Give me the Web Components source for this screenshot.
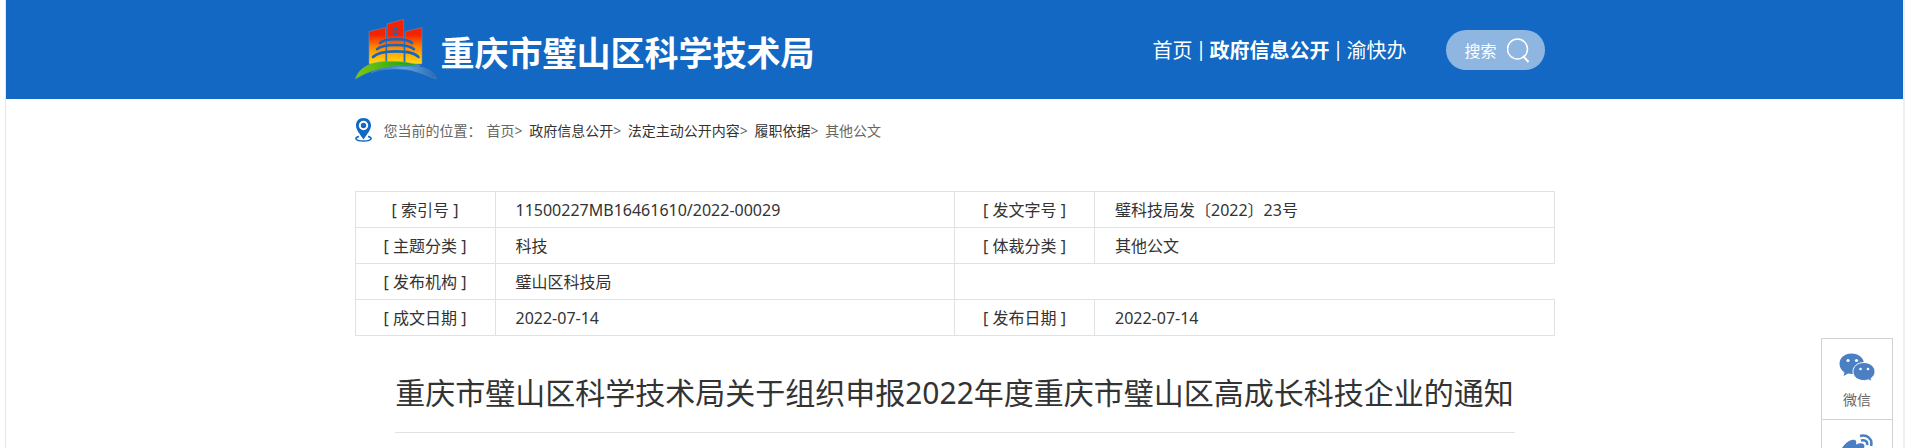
<!DOCTYPE html>
<html lang="zh-CN">
<head>
<meta charset="utf-8">
<title>重庆市璧山区科学技术局</title>
<style>
  html {
    background-color: #ffffff;
  }

  body {
    border-left: solid 1px #e5e5e5;
    border-right: solid 2px #f0f0f0;
    color: #333333;
    font-family: "Noto Sans", "Noto Sans CJK SC", sans-serif;
    font-size: 16px;
    margin: 0 0 0 5px;
    min-height: 100vh;
  }
</style>
</head>
<body>

<gov-header label="重庆市璧山区科学技术局">
  <a href="#">首页</a> | <a href="#" class="current">政府信息公开</a> | <a href="#">渝快办</a>
</gov-header>
<main>
  <gov-breadcrumb label="您当前的位置：">
    <a href="#" class="light">首页</a>&gt;
    <a href="#">政府信息公开</a>&gt;
    <a href="#">法定主动公开内容</a>&gt;
    <a href="#">履职依据</a>&gt;
    <a href="#" class="light">其他公文</a>
  </gov-breadcrumb>
  <gov-record></gov-record>
  <gov-title>重庆市璧山区科学技术局关于组织申报2022年度重庆市璧山区高成长科技企业的通知</gov-title>
</main>
<gov-share></gov-share>

<script>
class GovLogo extends HTMLElement {
  constructor() {
    super();

    const template = document.createElement( 'template' );
    template.innerHTML = /* template */ `
      <style>
        :host {
          display: block;
        }

        svg {
          display: block;
        }
      </style>
      <svg width="82" height="64" viewBox="0 0 82 64" fill="none">
        <defs>
          <linearGradient id="wall" x1="0" y1="0" x2="0" y2="48" gradientUnits="userSpaceOnUse">
            <stop offset="0.35" stop-color="#f52200"></stop>
            <stop offset="0.62" stop-color="#ff8a00"></stop>
            <stop offset="1" stop-color="#ffe714"></stop>
          </linearGradient>
          <linearGradient id="hill">
            <stop offset="0" stop-color="#82c80a"></stop>
            <stop offset="1" stop-color="#04a018"></stop>
          </linearGradient>
          <linearGradient id="river">
            <stop offset="0" stop-color="#1268c2"></stop>
            <stop offset="0.5" stop-color="#5eaae4"></stop>
            <stop offset="1" stop-color="#2b67b4"></stop>
          </linearGradient>
        </defs>
        <path d="M14 13.500 L30.500 9.500 V46 H14 Z M32 6 L48.700 1.300 V46 H32 Z M50.300 13.500 L67 9.500 V46 H50.300 Z" fill="url( #wall )" stroke="#7887aa" stroke-width=".6"></path>
        <rect x="38.500" y="10.500" width="4" height="6" rx="2" stroke="#1268c2" stroke-width="1.600"></rect>
        <g stroke="#1268c2" stroke-width="2.600" stroke-linecap="round">
          <path d="M25 25 C30 20 52 20 57 25"></path>
          <path d="M22 31.200 C28 25.500 53 25.500 59 31.200"></path>
          <path d="M18 39 C25 31.500 57 31.500 63.500 39"></path>
        </g>
        <path d="M.500 61 C3 51 14 44 30 43.500 C43 43 56 44 65 48 C45 45 16 50 .500 61 Z" fill="url( #hill )" stroke="#74a880" stroke-width=".6"></path>
        <path d="M16 55 C25 51 34 51 42 51 C55 51 64 54 81 61 C79 51 64 47 51 48.500 C37 48 24 50 16 55 Z" fill="url( #river )" stroke="#5b8cba" stroke-width=".6"></path>
      </svg>
    `;

    // Root
    this.attachShadow( {mode: 'open'} );
    this.shadowRoot.appendChild( template.content.cloneNode( true ) );
  }
}

window.customElements.define( 'gov-logo', GovLogo );

class GovSearch extends HTMLElement {
  constructor() {
    super();

    const template = document.createElement( 'template' );
    template.innerHTML = /* template */ `
      <style>
        :host {
          display: block;
        }

        button {
          align-items: center;
          background-color: #8fb6e1;
          border: none;
          border-radius: 20px;
          color: #ffffff;
          cursor: pointer;
          display: flex;
          font-family: inherit;
          font-size: 16px;
          gap: 10px;
          height: 40px;
          margin: 0;
          padding: 0 16px 0 18px;
        }

        svg {
          display: block;
        }
      </style>
      <button type="button">
        <span>搜索</span>
        <svg width="22" height="26" viewBox="0 0 22 26" fill="none" stroke="#ffffff" stroke-width="1.500">
          <circle cx="10.500" cy="12" r="10"></circle>
          <path d="M16 19 L21.500 25" stroke-width="2"></path>
        </svg>
      </button>
    `;

    // Root
    this.attachShadow( {mode: 'open'} );
    this.shadowRoot.appendChild( template.content.cloneNode( true ) );
  }
}

window.customElements.define( 'gov-search', GovSearch );

class GovHeader extends HTMLElement {
  constructor() {
    super();

    const template = document.createElement( 'template' );
    template.innerHTML = /* template */ `
      <style>
        :host {
          background-color: #1268c2;
          color: #ffffff;
          display: block;
        }

        header {
          align-items: center;
          box-sizing: border-box;
          display: flex;
          height: 99px;
          margin: 0 auto;
          max-width: 1200px;
        }

        h1 {
          font-size: 34px;
          font-weight: 700;
          line-height: 48px;
          margin: 0;
          padding: 6px 0 0 4px;
          white-space: nowrap;
        }

        nav {
          display: flex;
          font-size: 20px;
          gap: 3px;
          margin-left: auto;
          white-space: nowrap;
        }

        ::slotted( a ) {
          color: #ffffff;
          text-decoration: none;
        }

        ::slotted( .current ) {
          font-weight: 700;
        }

        gov-search {
          margin: 0 10px 0 40px;
        }
      </style>
      <header>
        <gov-logo></gov-logo>
        <h1></h1>
        <nav><slot></slot></nav>
        <gov-search></gov-search>
      </header>
    `;

    // Root
    this.attachShadow( {mode: 'open'} );
    this.shadowRoot.appendChild( template.content.cloneNode( true ) );

    // Elements
    this.$label = this.shadowRoot.querySelector( 'h1' );
  }

  // When attributes change
  _render() {
    this.$label.textContent = this.getAttribute( 'label' );
  }

  // Setup
  connectedCallback() {
    this._render();
  }

  // Watched attributes
  static get observedAttributes() {
    return ['label'];
  }

  // Observed attribute has changed
  // Update render
  attributeChangedCallback( name, old, value ) {
    this._render();
  }
}

window.customElements.define( 'gov-header', GovHeader );

class GovBreadcrumb extends HTMLElement {
  constructor() {
    super();

    const template = document.createElement( 'template' );
    template.innerHTML = /* template */ `
      <style>
        :host {
          color: #666666;
          display: block;
          font-size: 14px;
        }

        nav {
          align-items: center;
          display: flex;
          height: 62px;
          margin: 0 auto;
          max-width: 1200px;
        }

        span {
          padding: 0 2px 0 12px;
        }

        svg {
          display: block;
        }

        ::slotted( a ) {
          color: #333333;
          margin-left: 3px;
          text-decoration: none;
        }

        ::slotted( .light ) {
          color: #666666;
        }
      </style>
      <nav>
        <svg width="17" height="24" viewBox="0 0 17 24" fill="none">
          <path d="M8.500 0 C3.500 0 1 3.500 1 7.500 C1 12 5 16 8.500 21.500 C12 16 16 12 16 7.500 C16 3.500 13.500 0 8.500 0 Z" fill="#1268c2"></path>
          <circle cx="8.500" cy="7.500" r="3.700" stroke="#ffffff" stroke-width="2"></circle>
          <path d="M4 18.500 C-1 19.500 0 23 8.500 23 S18 19.500 13 18.500" stroke="#1268c2" stroke-width="1.600"></path>
        </svg>
        <span></span>
        <div><slot></slot></div>
      </nav>
    `;

    // Root
    this.attachShadow( {mode: 'open'} );
    this.shadowRoot.appendChild( template.content.cloneNode( true ) );

    // Elements
    this.$label = this.shadowRoot.querySelector( 'span' );
  }

  // When attributes change
  _render() {
    this.$label.textContent = this.getAttribute( 'label' );
  }

  // Setup
  connectedCallback() {
    this._render();
  }

  // Watched attributes
  static get observedAttributes() {
    return ['label'];
  }

  // Observed attribute has changed
  // Update render
  attributeChangedCallback( name, old, value ) {
    this._render();
  }
}

window.customElements.define( 'gov-breadcrumb', GovBreadcrumb );

class GovRecord extends HTMLElement {
  constructor() {
    super();

    const template = document.createElement( 'template' );
    template.innerHTML = /* template */ `
      <style>
        :host {
          display: block;
          margin: 30px auto 0 auto;
          max-width: 1200px;
        }

        table {
          border-collapse: collapse;
          line-height: 22px;
          table-layout: fixed;
          width: 100%;
        }

        col.label {
          width: 140px;
        }

        th, td {
          border: solid 1px #e2e2e2;
          box-sizing: border-box;
          height: 36px;
        }

        th {
          font-weight: 400;
          padding: 0;
          text-align: center;
        }

        td {
          padding: 0 20px;
        }

        td.empty {
          border-right: none;
        }
      </style>
      <table>
        <colgroup>
          <col class="label"><col><col class="label"><col>
        </colgroup>
        <tbody>
          <tr>
            <th scope="row">[ 索引号 ]</th>
            <td>11500227MB16461610/2022-00029</td>
            <th scope="row">[ 发文字号 ]</th>
            <td>璧科技局发〔2022〕23号</td>
          </tr>
          <tr>
            <th scope="row">[ 主题分类 ]</th>
            <td>科技</td>
            <th scope="row">[ 体裁分类 ]</th>
            <td>其他公文</td>
          </tr>
          <tr>
            <th scope="row">[ 发布机构 ]</th>
            <td>璧山区科技局</td>
            <td class="empty" colspan="2"></td>
          </tr>
          <tr>
            <th scope="row">[ 成文日期 ]</th>
            <td>2022-07-14</td>
            <th scope="row">[ 发布日期 ]</th>
            <td>2022-07-14</td>
          </tr>
        </tbody>
      </table>
    `;

    // Root
    this.attachShadow( {mode: 'open'} );
    this.shadowRoot.appendChild( template.content.cloneNode( true ) );
  }
}

window.customElements.define( 'gov-record', GovRecord );

class GovTitle extends HTMLElement {
  constructor() {
    super();

    const template = document.createElement( 'template' );
    template.innerHTML = /* template */ `
      <style>
        :host {
          display: block;
          margin: 0 auto;
          max-width: 1120px;
        }

        h2 {
          border-bottom: solid 1px #e2e2e2;
          font-size: 30px;
          font-weight: 400;
          line-height: 40px;
          margin: 0;
          padding: 37px 0 19px 0;
          text-align: center;
        }
      </style>
      <h2><slot></slot></h2>
    `;

    // Root
    this.attachShadow( {mode: 'open'} );
    this.shadowRoot.appendChild( template.content.cloneNode( true ) );
  }
}

window.customElements.define( 'gov-title', GovTitle );

class GovShare extends HTMLElement {
  constructor() {
    super();

    const template = document.createElement( 'template' );
    template.innerHTML = /* template */ `
      <style>
        /* Floats over the page */
        :host {
          background-color: #ffffff;
          border: solid 1px #d2d2d2;
          box-sizing: border-box;
          display: block;
          position: fixed;
          right: 12px;
          top: 338px;
          width: 72px;
        }

        a {
          align-items: center;
          box-sizing: border-box;
          color: #666666;
          display: flex;
          flex-direction: column;
          font-size: 14px;
          gap: 8px;
          height: 80px;
          line-height: 20px;
          padding: 14px 0 0 0;
          text-decoration: none;
        }

        a + a {
          border-top: solid 1px #d2d2d2;
          height: 81px;
        }
      </style>
      <a href="#">
        <svg width="36" height="29" viewBox="0 0 36 29">
          <path d="M12.500 .500 C5.500 .500 .500 5 .500 11 C.500 14.500 2.500 17.500 5.500 19.500 L4.500 23 L9 20.500 C19 22.500 25 17 25 11 C25 5 19.500 .500 12.500 .500 Z" fill="#4a7fc4"></path>
          <path d="M25 9.500 C18.500 9.500 14 13.500 14 18.500 C14 24 19 28 25.500 27.500 C27 27.500 28 27 29.500 26.800 L33 28.500 L32 25.500 C34.500 23.500 36 21.500 36 18.500 C36 13.500 31 9.500 25 9.500 Z" fill="#4a7fc4" stroke="#ffffff" stroke-width="1"></path>
          <g fill="#ffffff">
            <circle cx="9" cy="7.500" r="1.600"></circle>
            <circle cx="17.500" cy="7.500" r="1.600"></circle>
            <circle cx="21.500" cy="16" r="1.300"></circle>
            <circle cx="29" cy="16" r="1.300"></circle>
          </g>
        </svg>
        <span>微信</span>
      </a>
      <a href="#" aria-label="微博">
        <svg width="36" height="30" viewBox="0 0 36 30" fill="none">
          <path d="M1 20 C1 13 11 4 16 6 C18 7 17 9 17 10.500 C22 8 27 9 25 14 C29 15.500 30 18 28 22 C24 30 1 31 1 20 Z" fill="#4a7fc4"></path>
          <ellipse cx="14" cy="20" rx="9" ry="6" fill="#ffffff"></ellipse>
          <circle cx="13" cy="20.500" r="4" fill="#4a7fc4"></circle>
          <path d="M21 2 C28 0 34 5 32 12 M22 6.500 C26 5.500 29 7.500 28 11" stroke="#4a7fc4" stroke-width="2.600"></path>
        </svg>
      </a>
    `;

    // Root
    this.attachShadow( {mode: 'open'} );
    this.shadowRoot.appendChild( template.content.cloneNode( true ) );
  }
}

window.customElements.define( 'gov-share', GovShare );
</script>
</body>
</html>
